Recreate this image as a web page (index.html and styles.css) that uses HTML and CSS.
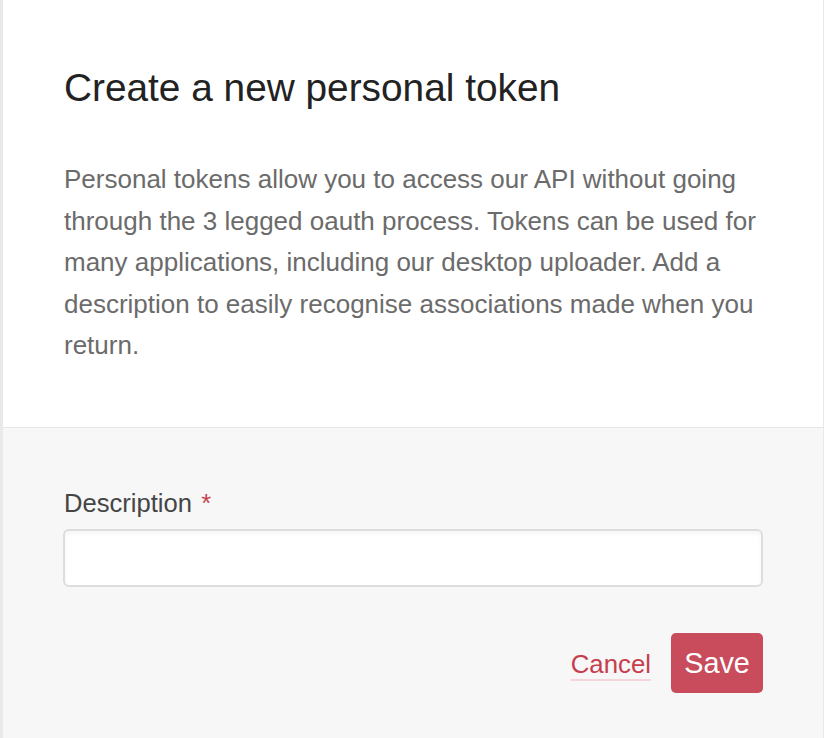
FILE: index.html
```html
<!DOCTYPE html>
<html>
<head>
<meta charset="utf-8">
<link rel="stylesheet" href="styles.css">
</head>
<body>
<div class="modal">
  <div class="modal-head">
    <h1 class="title">Create a new personal token</h1>
    <p class="intro">Personal tokens allow you to access our API without going through the 3 legged oauth process. Tokens can be used for many applications, including our desktop uploader. Add a description to easily recognise associations made when you return.</p>
  </div>
  <div class="modal-body">
    <label class="label" for="desc">Description <span class="req">*</span></label>
    <input class="field" id="desc" type="text">
    <div class="actions">
      <a class="cancel" href="#">Cancel</a>
      <button class="save" type="button">Save</button>
    </div>
  </div>
</div>
</body>
</html>
```
FILE: styles.css
```css
html, body {
  margin: 0;
  padding: 0;
  height: 100%;
}
body {
  background: #e9e9e9;
  font-family: "Liberation Sans", Arial, Helvetica, sans-serif;
  overflow: hidden;
}
.modal {
  margin-left: 3px;
  width: 820px;
  height: 738px;
  background: #f7f7f7;
  display: flex;
  flex-direction: column;
}
.modal-head {
  background: #ffffff;
  padding: 65px 60px 60px 60px;
  border-bottom: 1px solid #e6e6e6;
}
.title {
  margin: 0;
  font-size: 38.8px;
  line-height: 46px;
  font-weight: normal;
  color: #222222;
  padding-left: 1px;
}
.intro {
  margin: 48px 0 0 0;
  font-size: 26px;
  line-height: 41.6px;
  color: #6b6b6b;
  padding-left: 1px;
}
.modal-body {
  flex: 1;
  background: #f7f7f7;
  padding: 57px 60px 0 60px;
  display: flex;
  flex-direction: column;
}
.label {
  font-size: 25.6px;
  line-height: 36px;
  color: #454545;
  padding-left: 1px;
}
.req {
  color: #c9404f;
  margin-left: 2px;
}
.field {
  margin-top: 8px;
  height: 58px;
  box-sizing: border-box;
  border: 2px solid #dddddd;
  border-radius: 6px;
  background: #ffffff;
  box-shadow: inset 0 3px 4px rgba(0, 0, 0, 0.04);
  outline: none;
  font-size: 24px;
  padding: 0 14px;
}
.actions {
  margin-top: 46px;
  display: flex;
  justify-content: flex-end;
  align-items: center;
  gap: 20px;
}
.cancel {
  margin-top: 4px;
  font-size: 25.8px;
  color: #c83d4e;
  text-decoration: underline;
  text-decoration-color: #f3d6da;
  text-decoration-thickness: 2px;
  text-underline-offset: 6px;
}
.save {
  height: 60px;
  width: 92px;
  border: none;
  border-radius: 5px;
  background: #c84c5b;
  color: #ffffff;
  font-family: "Liberation Sans", Arial, Helvetica, sans-serif;
  font-size: 28.8px;
  padding: 2px 0 0 0;
  cursor: pointer;
}
```
